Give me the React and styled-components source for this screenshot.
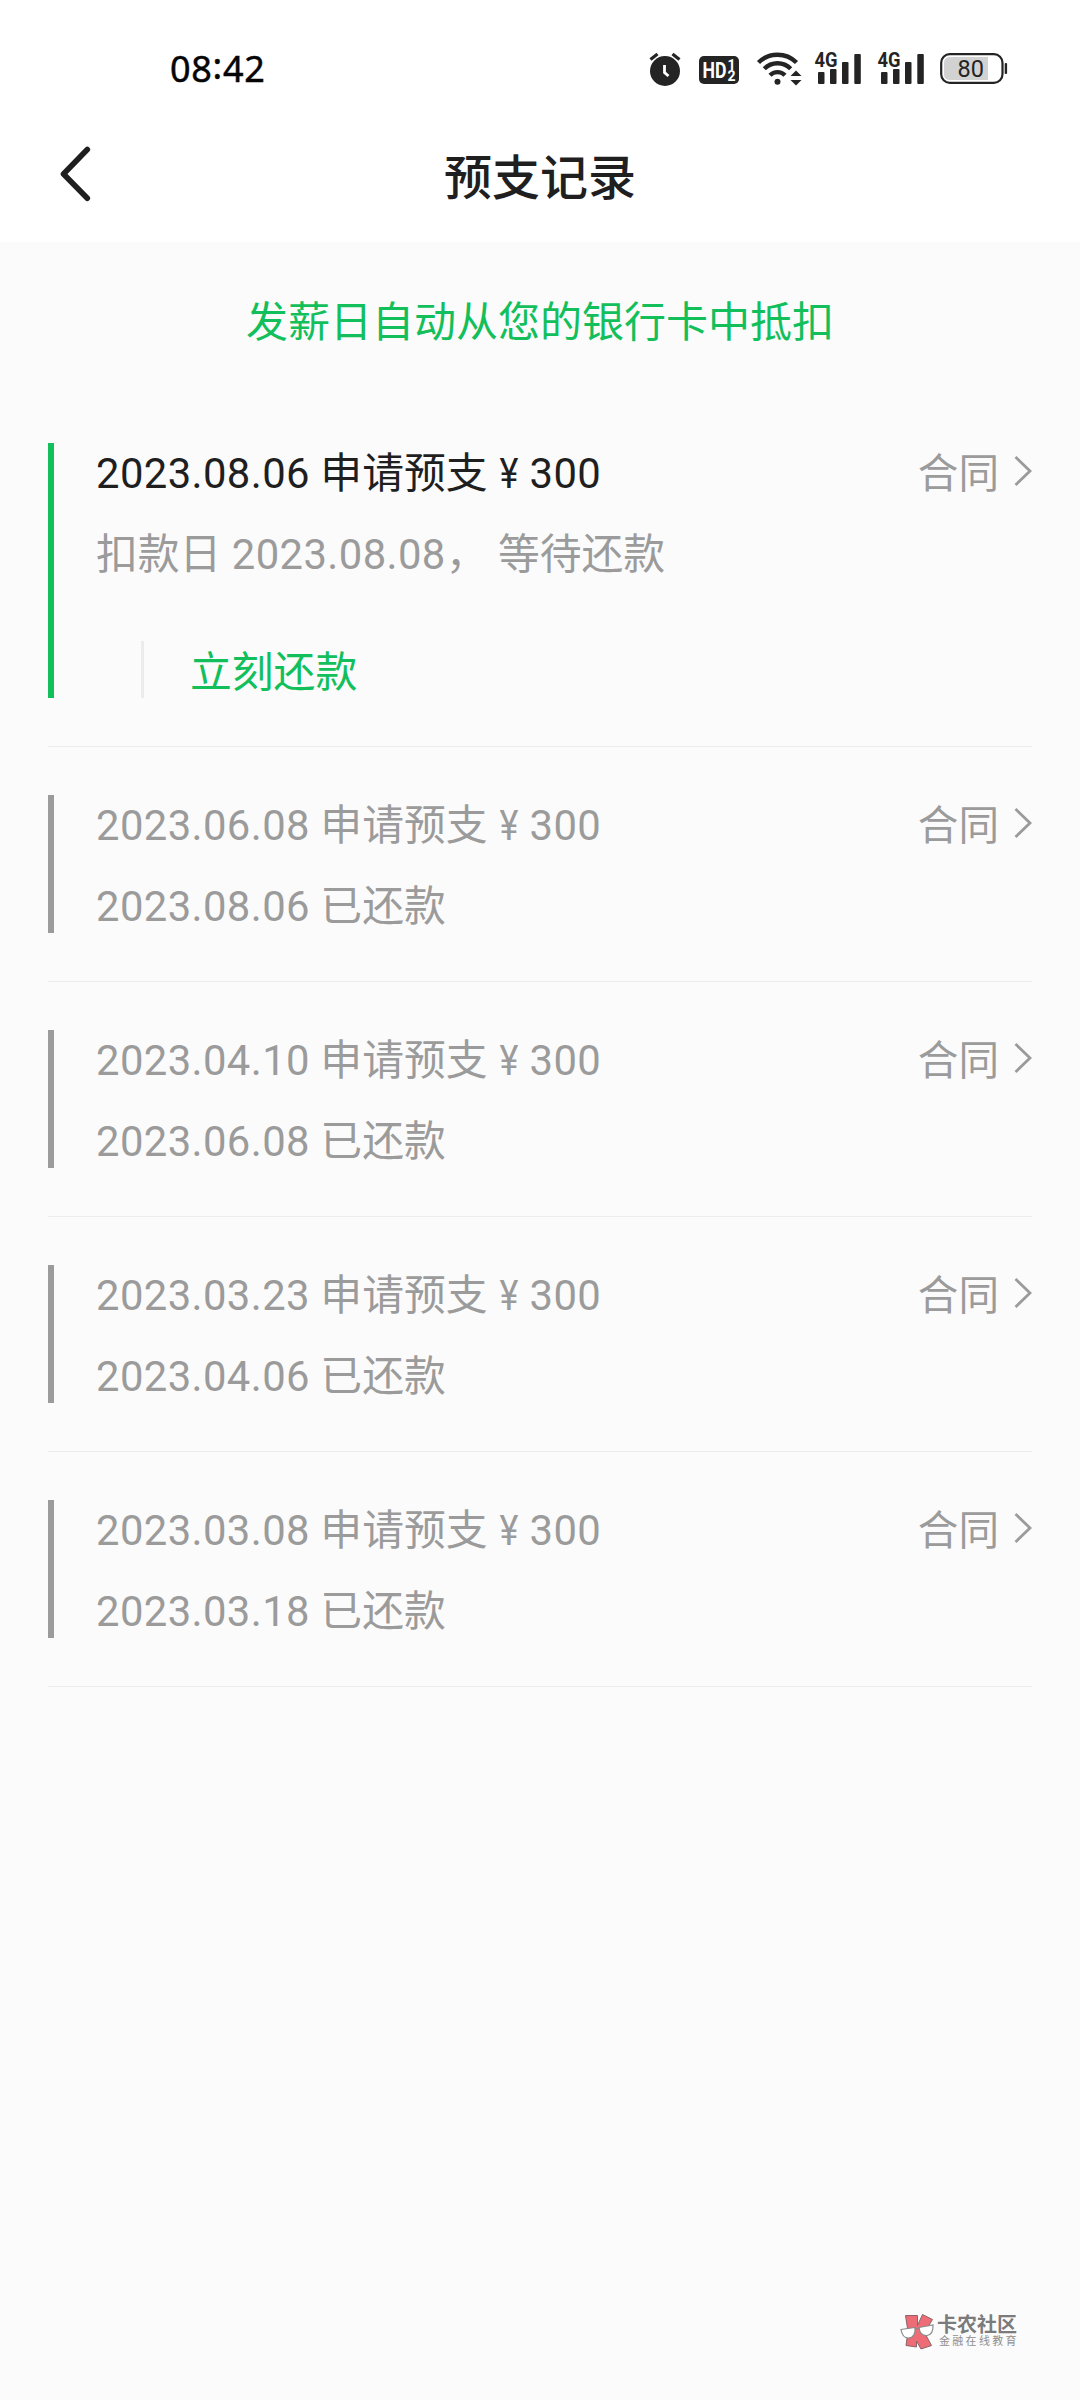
import React from "react";
import styled, { createGlobalStyle } from "styled-components";

const GREEN = "#12bf5b";
const GRAY = "#9b9b9b";
const INK = "#1f1f1f";

const GlobalStyle = createGlobalStyle`
  * { box-sizing: border-box; }
  body {
    margin: 0;
    background: #fbfbfb;
    font-family: Roboto, "Noto Sans CJK SC", sans-serif;
  }
`;

const Page = styled.div`
  display: flex;
  flex-direction: column;
  width: 1080px;
  height: 2400px;
  background: #fbfbfb;
  overflow: hidden;
`;

const StatusBar = styled.div`
  display: flex;
  justify-content: space-between;
  align-items: center;
  height: 138px;
  padding: 0 72px 0 170px;
  background: #fff;
`;

const Clock = styled.span`
  font-family: "Noto Sans", sans-serif;
  font-size: 36px;
  font-weight: 400;
  line-height: 48px;
  letter-spacing: 0.7px;
  color: #050505;
  -webkit-text-stroke: 0.5px #050505;
`;

const Colon = styled.span`
  position: relative;
  top: -3px;
`;

const StatusIcons = styled.div`
  display: flex;
  align-items: center;
  gap: 15px;
`;

const Icon = styled.svg`
  display: block;
  flex: none;
  overflow: visible;
`;

const NavBar = styled.header`
  display: grid;
  grid-template-columns: 150px 1fr 150px;
  align-items: start;
  height: 104px;
  background: #fff;
`;

const BackButton = styled.button`
  border: 0;
  margin: 0;
  padding: 6px 0 0 58px;
  background: none;
  height: 66px;
`;

const Title = styled.h1`
  margin: 6px 0 0;
  text-align: center;
  font-size: 48px;
  font-weight: 500;
  line-height: 70px;
  color: ${INK};
`;

const Notice = styled.p`
  margin: 52px 0 44px;
  text-align: center;
  font-size: 42px;
  line-height: 57px;
  color: ${GREEN};
`;

const List = styled.ul`
  list-style: none;
  margin: 0;
  padding: 0 48px;
`;

const Item = styled.li`
  padding: 48px 0;
  border-bottom: 1px solid #ececec;
`;

const Record = styled.div`
  border-left: 6px solid ${(p) => (p.$active ? GREEN : GRAY)};
  padding-left: 42px;
  font-size: 41.8px;
  line-height: 62px;
  color: ${GRAY};
`;

const HeadRow = styled.div`
  display: flex;
  justify-content: space-between;
  height: 57px;
`;

const Headline = styled.span`
  color: ${(p) => (p.$active ? INK : GRAY)};
  white-space: pre;
`;

const Digits = styled.span`
  letter-spacing: 0.4px;
`;

const Currency = styled.span`
  display: inline-block;
  width: 42px;
  text-align: center;
`;

const YenGlyph = styled.span`
  display: inline-block;
  transform: scaleX(0.86);
`;

const Contract = styled.a`
  display: flex;
  align-items: flex-start;
  gap: 14px;
  margin-right: -1px;
  font-size: 40.6px;
  line-height: 63px;
`;

const Chevron = styled(Icon)`
  margin-top: 11px;
`;

const StatusLine = styled.div`
  height: 57px;
  margin-top: 24px;
  white-space: pre;
`;

const Action = styled.div`
  display: inline-flex;
  height: 57px;
  margin: 60px 0 0 45px;
  padding-left: 46px;
  border-left: 3px solid #ececec;
  line-height: 63px;
  color: ${GREEN};
  vertical-align: top;
`;

const Watermark = styled.footer`
  display: flex;
  align-items: flex-start;
  gap: 2px;
  margin: auto 63px 50px auto;
`;

const Brand = styled.div`
  display: flex;
  flex-direction: column;
  width: 80px;
`;

const BrandName = styled.span`
  font-size: 20px;
  font-weight: 700;
  line-height: 22px;
  color: #7b7b7b;
`;

const BrandTag = styled.span`
  padding-left: 2px;
  font-size: 11px;
  line-height: 12px;
  letter-spacing: 2.3px;
  white-space: nowrap;
  color: #8f8f8f;
`;

function AlarmIcon() {
  return (
    <Icon width="36" height="36" viewBox="648 51 36 36">
      <circle cx="665" cy="71" r="15" fill="#242424" />
      <path d="M650.5 59.5l7-5.5M679.5 59.5l-7-5.5" stroke="#242424" strokeWidth="3.2" fill="none" />
      <path d="M664.5 65v7.5l4 3.5" stroke="#fff" strokeWidth="2.8" fill="none" />
    </Icon>
  );
}

function HdIcon() {
  return (
    <Icon width="43" height="36" viewBox="699 51 43 36">
      <rect x="699" y="56" width="40" height="28" rx="5" fill="#242424" />
      <g fill="#fff" fontFamily="Roboto" fontWeight="700">
        <text x="702.5" y="78" fontSize="22" textLength="24" lengthAdjust="spacingAndGlyphs">HD</text>
        <text x="727.5" y="69.5" fontSize="14">1</text>
        <text x="727.5" y="81" fontSize="14">2</text>
      </g>
    </Icon>
  );
}

function WifiIcon() {
  return (
    <Icon width="43" height="36" viewBox="757 51 43 36">
      <g fill="none" stroke="#242424" strokeWidth="4.4">
        <path d="M758.5 62.5a27 27 0 0 1 38 0" />
        <path d="M764.3 68.8a18.500 18.500 0 0 1 26.400 0" />
        <path d="M770 75.300a10.500 10.500 0 0 1 15 0" />
      </g>
      <circle cx="777.5" cy="81.7" r="3" fill="#242424" />
      <path d="M796 70.5l5.5 5.5h-11zM796 85.5l5.5-5.5h-11z" fill="#242424" />
    </Icon>
  );
}

function SignalIcon() {
  return (
    <Icon width="48" height="44" viewBox="815 47 48 44">
      <g fill="#242424">
        <rect x="818" y="72" width="6.500" height="12" rx="1" />
        <rect x="830" y="69" width="6.500" height="15" rx="1" />
        <rect x="842" y="62" width="6.500" height="22" rx="1" />
        <rect x="854.300" y="54" width="6.500" height="30" rx="1" />
        <text x="814.500" y="67" fontSize="20.500" fontFamily="Roboto" fontWeight="700" textLength="23" lengthAdjust="spacingAndGlyphs">4G</text>
      </g>
    </Icon>
  );
}

function BatteryIcon() {
  return (
    <Icon width="67" height="36" viewBox="941 51 67 36">
      <path d="M950 57h38v23h-38q-6 0-6-6v-11q0-6 6-6z" fill="#d2d2d2" />
      <rect x="941.2" y="54.2" width="61.3" height="28.6" rx="8.5" fill="none" stroke="#242424" strokeWidth="2.2" />
      <rect x="1004.7" y="63" width="2.4" height="11" rx="1" fill="#242424" />
      <text x="957.5" y="76.7" fontSize="23.5" fontFamily="Roboto" fill="#242424">80</text>
    </Icon>
  );
}

function BrandLogo() {
  return (
    <Icon width="35" height="36" viewBox="0 0 35 36">
      <g fill="#ee6c76" stroke="#8a6468" strokeWidth="1">
        <path d="M5.500 1.500h12v10l5-11 10 5-8 13 7 13-10.500 3.500-4.500-8v6l-10.500-1.500 2-14z" />
      </g>
      <g fill="#fff" stroke="#8b8b8b" strokeWidth="1.2">
        <path d="M1 15.500l14-2q1 9.500-6 10.500-6.500.5-8-8.500z" />
        <path d="M19 13.500l14-2.500q.500 9.500-6 10.500-7 .5-8-8z" />
      </g>
      <path d="M15 15l4-.8" stroke="#8b8b8b" strokeWidth="1.2" />
    </Icon>
  );
}

const records = [
  { date: "2023.08.06", prefix: "扣款日 ", due: "2023.08.08", status: "\uFF0C 等待还款", active: true },
  { date: "2023.06.08", due: "2023.08.06", status: " 已还款" },
  { date: "2023.04.10", due: "2023.06.08", status: " 已还款" },
  { date: "2023.03.23", due: "2023.04.06", status: " 已还款" },
  { date: "2023.03.08", due: "2023.03.18", status: " 已还款" },
];

function RecordItem({ date, prefix = "", due, status, active }) {
  return (
    <Item>
      <Record $active={active}>
        <HeadRow>
          <Headline $active={active}>
            <Digits>{date}</Digits>
            {" 申请预支"}
            <Currency>
              <YenGlyph>{"\u00A5"}</YenGlyph>
            </Currency>
            <Digits>300</Digits>
          </Headline>
          <Contract>
            合同
            <Chevron width="20" height="34" viewBox="0 0 20 34">
              <path d="M2.500 3l14.500 14-14.500 14" fill="none" stroke={GRAY} strokeWidth="2.800" />
            </Chevron>
          </Contract>
        </HeadRow>
        <StatusLine>
          {prefix}
          <Digits>{due}</Digits>
          {status}
        </StatusLine>
        {active && <Action>立刻还款</Action>}
      </Record>
    </Item>
  );
}

export default function App() {
  return (
    <Page>
      <GlobalStyle />
      <StatusBar>
        <Clock>
          08<Colon>:</Colon>42
        </Clock>
        <StatusIcons>
          <AlarmIcon />
          <HdIcon />
          <WifiIcon />
          <SignalIcon />
          <SignalIcon />
          <BatteryIcon />
        </StatusIcons>
      </StatusBar>
      <NavBar>
        <BackButton aria-label="返回">
          <Icon width="34" height="60" viewBox="58 144 34 60">
            <path d="M87.300 149.500L63.500 174l23.800 24.300" fill="none" stroke={INK} strokeWidth="5.600" strokeLinecap="round" strokeLinejoin="round" />
          </Icon>
        </BackButton>
        <Title>预支记录</Title>
      </NavBar>
      <Notice>发薪日自动从您的银行卡中抵扣</Notice>
      <List>
        {records.map((r) => (
          <RecordItem key={r.date} {...r} />
        ))}
      </List>
      <Watermark>
        <BrandLogo />
        <Brand>
          <BrandName>卡农社区</BrandName>
          <BrandTag>金融在线教育</BrandTag>
        </Brand>
      </Watermark>
    </Page>
  );
}
